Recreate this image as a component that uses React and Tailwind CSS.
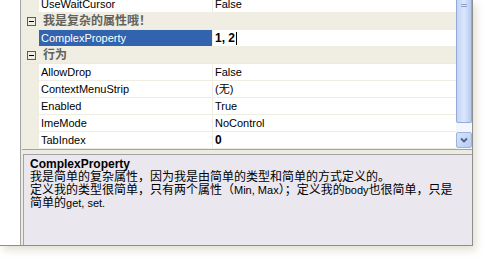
const rows = [
  { type: "prop", name: "UseWaitCursor", value: "False" },
  { type: "cat", name: "我是复杂的属性哦！" },
  { type: "prop", name: "ComplexProperty", value: "1, 2", bold: true, selected: true, caret: true },
  { type: "cat", name: "行为" },
  { type: "prop", name: "AllowDrop", value: "False" },
  { type: "prop", name: "ContextMenuStrip", value: "(无)" },
  { type: "prop", name: "Enabled", value: "True" },
  { type: "prop", name: "ImeMode", value: "NoControl" },
  { type: "prop", name: "TabIndex", value: "0", bold: true },
];

const font = { fontFamily: '"Liberation Sans", "Noto Sans CJK SC", sans-serif' };

function CategoryRow({ name }) {
  return (
    <div className="flex h-[17px] items-center border-b border-[#ECEAE6] bg-[#F0EEE2]">
      <div className="ml-[5px] flex h-[9px] w-[9px] items-center justify-center border border-[#5c5c5c]">
        <div className="h-[1px] w-[5px] bg-black" />
      </div>
      <span className="ml-[7px] text-[12px] font-bold leading-[16px] text-[#63625c]">
        {name}
      </span>
    </div>
  );
}

function PropRow({ row }) {
  return (
    <div className="flex h-[17px]">
      {/* gutter */}
      <div className="w-[17px] shrink-0 bg-[#F0EEE2]" />
      <div
        className={
          row.selected
            ? "flex w-[174px] shrink-0 items-center border-b border-r border-[#EFEDE2] bg-[#3163AE] pl-[2px] text-white"
            : "flex w-[174px] shrink-0 items-center border-b border-r border-[#EFEDE2] bg-white pl-[2px] text-black"
        }
      >
        <span className="text-[11px] leading-[16px] whitespace-nowrap">{row.name}</span>
      </div>
      <div className="flex flex-1 items-center border-b border-[#EFEDE2] bg-white pl-[2px]">
        <span
          className={
            row.bold
              ? "text-[12px] font-bold leading-[16px] text-black whitespace-nowrap"
              : "text-[11px] leading-[16px] text-black whitespace-nowrap"
          }
        >
          {row.value}
        </span>
        {row.caret && <div className="ml-[1px] h-[13px] w-[1px] bg-black" />}
      </div>
    </div>
  );
}

function ScrollBar() {
  return (
    <div className="flex w-[16px] shrink-0 flex-col bg-[#F3F6FD]">
      {/* thumb */}
      <div className="relative h-[123px] rounded-b-[2px] border border-t-0 border-[#94A9D6] bg-gradient-to-r from-[#C2D3F5] via-[#DCE7FC] to-[#B7CBF0]">
        <div className="absolute left-[4px] top-[4px] h-[1px] w-[6px] bg-[#8DA3CF]" />
        <div className="absolute left-[4px] top-[6px] h-[1px] w-[6px] bg-[#8DA3CF]" />
      </div>
      <div className="flex-1" />
      {/* down button */}
      <div className="mb-[1px] flex h-[16px] items-center justify-center rounded-[2px] border border-[#9DB3DF] bg-gradient-to-br from-[#D5E2FA] to-[#B9CDF2]">
        <svg width="8" height="6" viewBox="0 0 8 6">
          <path d="M1 1.5 L4 4.5 L7 1.5" fill="none" stroke="#4D6185" strokeWidth="1.8" />
        </svg>
      </div>
    </div>
  );
}

export default function App() {
  return (
    <div className="h-[261px] w-[485px] overflow-hidden bg-white" style={font}>
      <div className="flex h-[246px] w-[473px] border-b border-r border-[#8E8E8E] bg-white pl-[20px] shadow-[3px_4px_8px_rgba(150,140,90,0.28)]">
        <div className="flex flex-1 flex-col border-l border-[#A3A3A3] bg-[#EDEBE4]">
          {/* property grid */}
          <div className="ml-[1px] flex h-[150px] overflow-hidden border-b border-[#A3A3A3]">
            <div className="flex-1 overflow-hidden">
              <div className="-mt-[4px]">
                {rows.map((row, i) =>
                  row.type === "cat" ? (
                    <CategoryRow key={i} name={row.name} />
                  ) : (
                    <PropRow key={i} row={row} />
                  )
                )}
              </div>
            </div>
            <ScrollBar />
          </div>

          {/* splitter */}
          <div className="h-[4px]" />

          {/* description */}
          <div className="ml-[2px] flex-1 border-l border-t border-[#A3A3A3] bg-[#EAE8EE] pl-[6px] pt-[2px] text-black">
            <div className="text-[12px] font-bold leading-[14px]">ComplexProperty</div>
            <div className="text-[12px] leading-[13px] whitespace-nowrap">
              我是简单的复杂属性，因为我是由简单的类型和简单的方式定义的。
            </div>
            <div className="text-[12px] leading-[13px] whitespace-nowrap">
              定义我的类型很简单，只有两个属性（<span className="text-[11px]">Min, Max</span>）；定义我的<span className="text-[11px]">body</span>也很简单，只是
            </div>
            <div className="text-[12px] leading-[13px] whitespace-nowrap">
              简单的<span className="text-[11px]">get, set.</span>
            </div>
          </div>
        </div>
      </div>
    </div>
  );
}
